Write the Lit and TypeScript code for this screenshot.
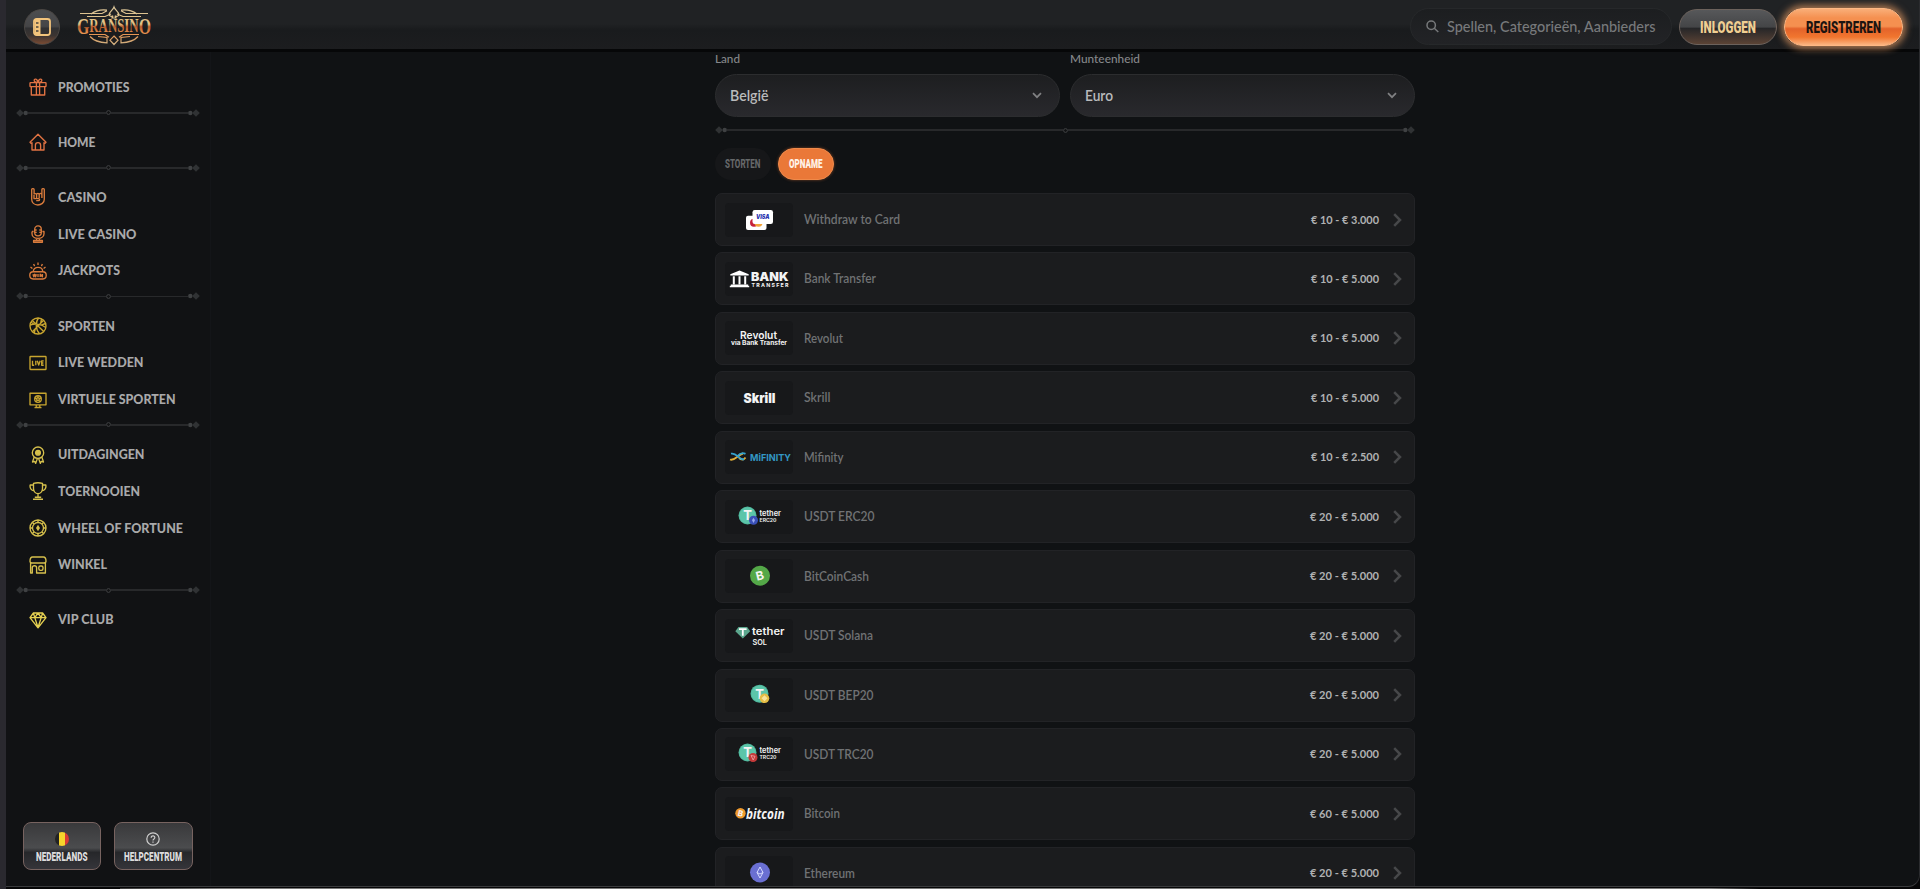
import { LitElement, html, svg, css, TemplateResult, SVGTemplateResult } from 'lit';
import { customElement, property } from 'lit/decorators.js';

interface MenuItem {
  label: string;
  width: number;
  icon: string;
}

interface PaymentMethod {
  name: string;
  width: number;
  range: string;
  logo: string;
}

const MENU: MenuItem[][] = [
  [{ label: 'PROMOTIES', width: 71.5, icon: 'gift' }],
  [{ label: 'HOME', width: 37.5, icon: 'home' }],
  [
    { label: 'CASINO', width: 48.5, icon: 'rock' },
    { label: 'LIVE CASINO', width: 78.5, icon: 'mic' },
    { label: 'JACKPOTS', width: 62, icon: 'jackpot' },
  ],
  [
    { label: 'SPORTEN', width: 57, icon: 'ball' },
    { label: 'LIVE WEDDEN', width: 85.5, icon: 'live' },
    { label: 'VIRTUELE SPORTEN', width: 117.5, icon: 'screen' },
  ],
  [
    { label: 'UITDAGINGEN', width: 86.5, icon: 'medal' },
    { label: 'TOERNOOIEN', width: 82, icon: 'trophy' },
    { label: 'WHEEL OF FORTUNE', width: 125, icon: 'wheel' },
    { label: 'WINKEL', width: 49, icon: 'shop' },
  ],
  [{ label: 'VIP CLUB', width: 55.5, icon: 'gem' }],
];

const METHODS: PaymentMethod[] = [
  { name: 'Withdraw to Card', width: 96, range: '€ 10 - € 3.000', logo: 'card' },
  { name: 'Bank Transfer', width: 72, range: '€ 10 - € 5.000', logo: 'bank' },
  { name: 'Revolut', width: 39, range: '€ 10 - € 5.000', logo: 'revolut' },
  { name: 'Skrill', width: 26.5, range: '€ 10 - € 5.000', logo: 'skrill' },
  { name: 'Mifinity', width: 39.5, range: '€ 10 - € 2.500', logo: 'mifinity' },
  { name: 'USDT ERC20', width: 70.5, range: '€ 20 - € 5.000', logo: 'erc20' },
  { name: 'BitCoinCash', width: 65, range: '€ 20 - € 5.000', logo: 'bch' },
  { name: 'USDT Solana', width: 69, range: '€ 20 - € 5.000', logo: 'solana' },
  { name: 'USDT BEP20', width: 69.5, range: '€ 20 - € 5.000', logo: 'bep20' },
  { name: 'USDT TRC20', width: 69.5, range: '€ 20 - € 5.000', logo: 'trc20' },
  { name: 'Bitcoin', width: 36, range: '€ 60 - € 5.000', logo: 'bitcoin' },
  { name: 'Ethereum', width: 51, range: '€ 20 - € 5.000', logo: 'eth' },
];

// All menu icons share an 18x18 box and are stroked with the item colour.
const ICONS: Record<string, SVGTemplateResult> = {
  gift: svg`<rect x="1" y="4.6" width="16" height="4" rx=".6"/><path d="M2.3 8.6V17h13.4V8.6M7.4 4.8V17M10.6 4.8V17M9 4.4C6.8 4.6 4.9 3.8 5.2 2.1 5.5.5 8.3.4 9 4.4c.7-4 3.500-3.900 3.800-2.300.3 1.700-1.600 2.500-3.800 2.300"/>`,
  home: svg`<path d="M1 9.300 9 1.300l8 8-1.200 1.100-.8-.7V17H3V9.700l-.8.7zM6.400 17v-4.800a2.600 2.600 0 0 1 5.200 0V17"/>`,
  rock: svg`<path d="M2.700 1.400v9.800c0 3.400 2.600 5.800 6.100 5.800s6.500-2.400 6.500-5.800V1.400c0-1-2.400-1-2.400 0v5M2.700 1.400c0-1 2.400-1 2.400 0v5.200M5.100 6.600c0-1.300 2.500-1.300 2.500 0v3.300M7.600 6.400c0-1.300 2.600-1.300 2.600 0v3.500M10.200 6.400c0-1.300 2.700-1.300 2.700 0v3.500M5 7v3.600h4.600c1.300 0 1.300 2-.2 2H7.200"/>`,
  mic: svg`<rect x="5.700" y=".9" width="6.600" height="10" rx="3.300"/><path d="M5.700 5h2M10.300 5h2M5.700 7.300h2M10.300 7.300h2M3 6.500H4.600M3 6.500v2.200c0 2.600 2.400 4.700 6 4.700s6-2.100 6-4.700V6.500h-1.600M7.600 13.400v2M10.400 13.400v2M4.600 17.200v-1.700h8.800v1.700z"/>`,
  jackpot: svg`<rect x=".8" y="9.700" width="16.400" height="7.300" rx="3.400"/><path d="M4.300 9.500c0-2.400 2-4.100 4.700-4.100s4.700 1.700 4.700 4.100M9 .6v2.500M4.600 2l1 2.100M13.400 2l-1 2.100M1.500 5l1.900 1.500M16.500 5l-1.900 1.500"/><path d="m4 12.200.8 2.600.9-2.600.9 2.600.8-2.600M9 12v3M11.200 15v-2.800l2.200 2.600V12"/>`,
  ball: svg`<circle cx="9" cy="9" r="8"/><path d="m3.300 3.400 11.400 11.200M14.600 3.300 3.400 14.700M9.600 1C6.400 4.500 6.300 12 10.500 16.800M1.200 8C6 6.300 12.500 7 16.800 10.500M2 5.300l3.200 2M12.500 2l-.8 4.200M16.500 6.500l-4.300 1.600M5.200 16.200l1-4"/>`,
  live: svg`<rect x="1" y="2.500" width="16" height="13" rx=".6"/><path d="M3.500 6.800v4.400h1.700M6.800 6.800v4.400M8.300 6.800 9.700 11l1.500-4.200M14.700 6.800h-2v4.400h2M12.700 9h1.700"/>`,
  screen: svg`<path d="M1 2.200h16v11.600H1zM5.500 16.600h7M7.200 13.800v2.600h3.600v-2.600"/><circle cx="9" cy="8" r="3.300"/><path d="m9 6.500 1.500 1.100-.6 1.700H8.100l-.6-1.700zM9 4.700v1.800M12 7l-1.500.6M10.900 10.600l-1-1.300M7.100 10.600l1-1.300M6 7l1.500.6"/>`,
  medal: svg`<circle cx="9" cy="6.700" r="5.700"/><circle cx="9" cy="6.700" r="2.400" fill="currentColor"/><path d="m5.200 11-1.700 5 2.200-.6 1 2 1.700-5M12.800 11l1.700 5-2.200-.6-1 2-1.700-5"/>`,
  trophy: svg`<path d="M4.500 1.400c2-.6 7-.6 9 0v4.800c0 3.300-2 5.400-4.500 5.400S4.500 9.500 4.500 6.200zM4.500 3H1.200C.6 5.800 2 8.300 5.300 8.800M13.500 3h3.300c.6 2.800-.8 5.300-4.100 5.800M9 11.600v3.600M5.800 15.200h6.400M4 17.200h10"/>`,
  wheel: svg`<circle cx="9" cy="9" r="8"/><circle cx="9" cy="9" r="5.500"/><path d="M9 1v2.500M9 14.500V17M1 9h2.500M14.500 9H17M3.400 3.400l1.700 1.700M12.900 12.900l1.700 1.700M14.600 3.400l-1.700 1.700M5.100 12.900l-1.700 1.700"/><path fill="currentColor" stroke="none" d="m9 5.700 2 3.300-2 3.300L7 9z"/>`,
  shop: svg`<path d="M3.600 1h10.800C16 1 17 3 17 5.300c0 1.200-1 1.700-2 1.700H3C2 7 1 6.500 1 5.300 1 3 2 1 3.600 1zM1.600 7v10h1.700v-5.200c0-2.800 4.300-2.800 4.300 0V17h8.800V7"/><rect x="9.800" y="10" width="4.200" height="4.300" rx="1.500"/>`,
  gem: svg`<path d="M4.400 2h9.200l3.400 4.600L9 16.800 1 6.600zM1 6.600h16M9 2 5.800 6.600 9 16.500l3.200-9.900zM4.400 2l1.400 4.600M13.600 2l-1.400 4.600"/>`,
};

const tether = (x: number, y: number, r: number) => svg`
  <circle cx=${x} cy=${y} r=${r} fill="#4fb79c"/>
  <circle cx=${x} cy=${y} r=${r - 1} fill="#5cc5a9"/>
  <text x=${x} y=${y + r * 0.55} class="logo-sans" text-anchor="middle" font-size=${r * 1.45}>T</text>`;

// Provider logos, drawn on a 68x34 plate.
const LOGOS: Record<string, SVGTemplateResult> = {
  card: svg`
    <rect x="21" y="12.800" width="20.500" height="14.200" rx="2" fill="#fff"/>
    <circle cx="29" cy="19.700" r="4" fill="#c5213b"/><circle cx="33.500" cy="19.700" r="4" fill="#f2a43a"/>
    <rect x="27.500" y="7" width="20.500" height="14" rx="2.200" fill="#fff"/>
    <text x="31" y="16" class="logo-sans heavy" font-style="italic" font-size="6.200" textLength="13.500" lengthAdjust="spacingAndGlyphs" fill="#2d36b0">VISA</text>`,
  bank: svg`
    <path fill="#fff" d="m14.500 8.500 9.200 3.700v1.300H5.300v-1.300zM7.800 14.200h2v8h-2zM13.500 14.200h2v8h-2zM19.200 14.200h2v8h-2zM5.800 22.500h17.400v1.200h1v1.600H4.800v-1.600h1z"/>
    <text x="26" y="19" class="logo-sans heavy" font-size="12" textLength="37.500" lengthAdjust="spacingAndGlyphs">BANK</text>
    <text x="26.500" y="25.300" class="logo-sans" font-size="5.300" textLength="37">TRANSFER</text>`,
  revolut: svg`
    <text x="15" y="18" class="logo-sans mid" font-size="11" textLength="37" lengthAdjust="spacingAndGlyphs">Revolut</text>
    <text x="6" y="24" class="logo-sans" font-size="5.600" textLength="56" lengthAdjust="spacingAndGlyphs">via Bank Transfer</text>`,
  skrill: svg`<text x="18.500" y="22" class="logo-sans heavy" font-size="13.500" textLength="32" lengthAdjust="spacingAndGlyphs">Skrill</text>`,
  mifinity: svg`
    <path fill="none" stroke="#e0ae38" stroke-width="1.800" d="M5 19.500c5 1.800 8-5 13-6M14 18c2 2.300 5 2.200 6.500-.5"/>
    <path fill="none" stroke="#35a3cf" stroke-width="1.800" d="M6 13.700c6-1.500 7 5.800 13 5.800M12 16.500c3-3.500 6-4 8.500-2.600"/>
    <text x="25" y="20.500" class="logo-sans" font-size="9.500" textLength="41" lengthAdjust="spacingAndGlyphs" fill="#3398c5">MiFINITY</text>`,
  erc20: svg`
    ${tether(22.5, 15.5, 9)}
    <circle cx="28.500" cy="20.300" r="4.500" fill="#3a50b8"/><path fill="#9aa8ef" d="m28.500 17.700 1.500 2.600-1.500 2.600-1.500-2.600z"/>
    <text x="34.500" y="16.200" class="logo-sans mid" font-size="7.500" textLength="21.500" lengthAdjust="spacingAndGlyphs">tether</text>
    <text x="34.500" y="22" class="logo-sans mid" font-size="5" textLength="17" lengthAdjust="spacingAndGlyphs">ERC20</text>`,
  bch: svg`
    <circle cx="35" cy="16.700" r="10" fill="#54a848"/>
    <text x="35" y="21" class="logo-sans" text-anchor="middle" font-size="12" transform="rotate(-14 35 17)">B</text>`,
  solana: svg`
    <path fill="#5ca78e" d="M13.500 8h8.600l3.100 4.300-7.400 7.200-7.500-7.200z"/>
    <path fill="#fff" d="M14 9.200h7.600v1.700h-2.900v5.800h-1.800v-5.800H14z"/>
    <text x="27" y="16.300" class="logo-sans mid" font-size="10" textLength="32.500" lengthAdjust="spacingAndGlyphs">tether</text>
    <text x="27.500" y="26" class="logo-sans mid" font-size="7.600" textLength="14.500" lengthAdjust="spacingAndGlyphs">SOL</text>`,
  bep20: svg`
    ${tether(34.5, 15.7, 9)}
    <circle cx="39.500" cy="20.300" r="4.800" fill="#e5bd45"/><path fill="#fff3c0" d="m39.500 17.300 3 3-3 3-3-3z" opacity=".7"/>`,
  trc20: svg`
    ${tether(22.5, 15.5, 9)}
    <circle cx="28" cy="20.500" r="4.500" fill="#c43a3a"/><path fill="none" stroke="#f0a8a8" stroke-width=".8" d="m26 18.500 4 .8-1.800 3.700z"/>
    <text x="34.500" y="16.200" class="logo-sans mid" font-size="7.500" textLength="21.500" lengthAdjust="spacingAndGlyphs">tether</text>
    <text x="34.500" y="22" class="logo-sans mid" font-size="5" textLength="17" lengthAdjust="spacingAndGlyphs">TRC20</text>`,
  bitcoin: svg`
    <circle cx="15.500" cy="16.300" r="5.200" fill="#ef9a2d"/>
    <text x="15.500" y="19.200" class="logo-sans" font-size="8" text-anchor="middle" transform="rotate(14 15.500 16.300)">B</text>
    <text x="21" y="21.500" class="logo-humanist" font-size="13.500" textLength="38.500" lengthAdjust="spacingAndGlyphs">bitcoin</text>`,
  eth: svg`
    <circle cx="35" cy="16.500" r="10" fill="#6a6fd2"/>
    <path fill="none" stroke="#d6daff" stroke-width="1" d="m35 11 3 5.500-3 5.500-3-5.500zM32 16.500l3 1.500 3-1.500"/>`,
};

/** Single line of text set to an exact width. */
@customElement('fit-text')
export class FitText extends LitElement {
  @property({ type: String })
  text = '';

  @property({ type: Number })
  width = 50;

  @property({ type: Number })
  size = 12.5;

  static override styles = css`
    :host {
      display: block;
      flex: none;
    }
    svg {
      display: block;
      overflow: visible;
      fill: currentColor;
    }
  `;

  override render() {
    const height = Math.round(this.size * 1.2);
    return html`
      <svg width=${this.width} height=${height}>
        <text x="0" y=${height / 2 + this.size * 0.36} font-size=${this.size}
          textLength=${this.width} lengthAdjust="spacingAndGlyphs">${this.text}</text>
      </svg>
    `;
  }
}

/** Thin rule with diamonds at its ends and a ring in the middle. */
@customElement('ornament-line')
export class OrnamentLine extends LitElement {
  static override styles = css`
    :host {
      display: flex;
      align-items: center;
      height: 8px;
      color: #303234;
    }
    svg {
      flex: none;
      display: block;
    }
    .flip {
      transform: scaleX(-1);
    }
    .rule {
      flex: 1;
      height: 1.500px;
      background: #28292b;
    }
  `;

  private end(cls: string) {
    return html`
      <svg class=${cls} width="12" height="8" viewBox="0 0 12 8" fill="currentColor">
        <path d="m4 .2 3.800 3.800L4 7.800.2 4z" />
        <circle cx="9.700" cy="4" r="2.200" fill="#3f4143" />
      </svg>
    `;
  }

  override render() {
    return html`
      ${this.end('')}
      <div class="rule"></div>
      <svg width="5" height="5" viewBox="0 0 5 5">
        <circle cx="2.500" cy="2.500" r="1.900" fill="none" stroke="#404244" />
      </svg>
      <div class="rule"></div>
      ${this.end('flip')}
    `;
  }
}

@customElement('app-root')
export class AppRoot extends LitElement {
  static override styles = css`
    :host {
      display: block;
      width: 1920px;
      height: 889px;
      overflow: hidden;
      box-sizing: border-box;
      border-left: 6px solid #2a292f;
      background: #060607;
      color: #b4b5b6;
      font-family: Lato, 'Liberation Sans', sans-serif;
    }
    * {
      box-sizing: border-box;
    }
    .page {
      display: flex;
      flex-direction: column;
      height: 887px;
      border-right: 1px solid #2b2c2f;
      border-bottom: 1px solid #3a3b3d;
      border-bottom-right-radius: 12px;
      background: #101214;
      overflow: hidden;
    }
    .header {
      flex: none;
      display: flex;
      align-items: center;
      height: 52px;
      padding: 4px 16px 0 18px;
      border-bottom: 3px solid #060708;
      background: linear-gradient(#202224 0 24px, #191b1d 30px, #1c1d1f);
    }
    .toggle {
      display: flex;
      align-items: center;
      justify-content: center;
      width: 36px;
      height: 36px;
      border-radius: 50%;
      border: 1px solid #4b4744;
      background: linear-gradient(#4d4e50, #454547 48%, #303032 54%, #3b3431 75%, #7a4b33);
    }
    .brand {
      margin: -1px 0 0 17px;
      overflow: visible;
    }
    .brand text {
      font-family: 'Liberation Serif', serif;
      font-weight: bold;
    }
    .search {
      display: flex;
      align-items: center;
      gap: 8px;
      width: 262px;
      height: 37px;
      margin: 0 7px 0 auto;
      padding-left: 15px;
      border: 1px solid #26282a;
      border-radius: 19px;
      background: linear-gradient(#1c1e20, #222326);
      color: #77797b;
      font-weight: 500;
    }
    .pill {
      display: flex;
      align-items: center;
      justify-content: center;
      font-family: Roboto, sans-serif;
      font-weight: 900;
    }
    .login {
      width: 98px;
      height: 36px;
      margin-right: 7px;
      border: 1px solid #6c625c;
      border-radius: 18px;
      background: linear-gradient(#57585a, #444547 50%, #262628 54%, #5b4335);
      color: #f0cf92;
    }
    .register {
      width: 119px;
      height: 38px;
      border: 1px solid #ffb884;
      border-radius: 19px;
      background: linear-gradient(#f9ae78, #f59050 25% 48%, #e4632b 55%, #f1762f 78%, #fbb582);
      box-shadow: 0 0 7px 3px #a8754f;
      color: #1c1410;
    }
    .body {
      flex: 1;
      display: flex;
      min-height: 0;
      overflow: hidden;
    }
    .sidebar {
      flex: none;
      display: flex;
      flex-direction: column;
      width: 205px;
      padding: 17px 0 16px;
      border-right: 1px solid #131518;
      background: #111214;
    }
    .item {
      display: flex;
      align-items: center;
      gap: 10.500px;
      height: 36.750px;
      padding-left: 23px;
      font-weight: 900;
      color: #a9a9aa;
    }
    .item svg {
      flex: none;
      fill: none;
      stroke: currentColor;
      stroke-width: 1.350;
      stroke-linejoin: round;
    }
    .group0,
    .group1 {
      color: #e27343;
    }
    .group2 {
      color: #d97b3c;
    }
    .group3 {
      color: #c8a52f;
    }
    .group4 {
      color: #d6c04c;
    }
    .group5 {
      color: #e5d051;
    }
    .divider {
      height: 18.300px;
      padding: 3px 5px 0 10px;
      margin-right: 5px;
    }
    .bottom {
      display: flex;
      gap: 13px;
      margin-top: auto;
      padding-left: 16.500px;
    }
    .tile {
      display: flex;
      flex-direction: column;
      align-items: center;
      justify-content: center;
      gap: 3px;
      width: 78.500px;
      height: 48px;
      padding-top: 3px;
      border: 1px solid #776360;
      border-radius: 8px;
      background: linear-gradient(#39393b, #4b4c4e 54%, #26272a 64%, #35353a);
      color: #dcdcdc;
      font-family: Roboto, sans-serif;
      font-weight: 900;
    }
    .content {
      flex: 1;
      display: flex;
      flex-direction: column;
      align-items: flex-start;
      padding-left: 504px;
      overflow: hidden;
    }
    .fields {
      display: flex;
      gap: 10px;
      width: 700px;
    }
    .field {
      flex: 1;
    }
    .caption {
      height: 21.500px;
      color: #85878a;
      font-weight: 500;
    }
    .select {
      display: flex;
      align-items: center;
      justify-content: space-between;
      height: 43px;
      padding: 0 17px 0 14px;
      border: 1px solid #2c2d2f;
      border-radius: 22px;
      background: linear-gradient(#1d1e20, #29292d);
      color: #b9babb;
      font-weight: 600;
    }
    .split {
      width: 700px;
      margin-top: 9.500px;
    }
    .tabs {
      display: flex;
      gap: 7px;
      margin-top: 13.500px;
    }
    .tab {
      width: 56px;
      height: 32px;
      border-radius: 16px;
      background: #161719;
      color: #66686a;
      font-weight: 800;
    }
    .tab.active {
      background: #ea7838;
      border: 1px solid #f08a4a;
      box-shadow: 0 0 3px #7c4426;
      color: #fff3e8;
      font-weight: 900;
    }
    .methods {
      display: flex;
      flex-direction: column;
      gap: 6.450px;
      width: 700px;
      margin-top: 13.500px;
    }
    .method {
      flex: none;
      display: flex;
      align-items: center;
      height: 53px;
      padding: 0 12px 0 9px;
      border: 1px solid #222326;
      border-radius: 7px;
      background: #1b1c1e;
      color: #707274;
      font-weight: 600;
    }
    .plate {
      flex: none;
      width: 68px;
      height: 34px;
      margin-right: 10.500px;
      border-radius: 4px;
      background: #17181a;
      fill: #f4f4f4;
    }
    .logo-sans {
      font-family: Inter, sans-serif;
      font-weight: 700;
    }
    .logo-humanist {
      font-family: 'Open Sans', sans-serif;
      font-weight: 700;
      font-style: italic;
    }
    .heavy {
      font-weight: 900;
    }
    .mid {
      font-weight: 600;
    }
    .range {
      margin-left: auto;
      margin-right: 14.500px;
      color: #b0b1b2;
      font-weight: 700;
    }
    .foot {
      height: 1px;
      width: 1640px;
      margin: 1px 0 0 114px;
      background: linear-gradient(90deg, #3a3a3a, #787878 100px 1590px, #060607);
    }
  `;

  private renderBrand(): TemplateResult {
    return html`
      <svg class="brand" width="74" height="40" viewBox="0 0 74 40" fill="none" stroke="url(#gold)" stroke-width="1.200">
        <defs>
          <linearGradient id="gold" gradientUnits="userSpaceOnUse" x1="0" y1="0" x2="0" y2="40">
            <stop offset="0" stop-color="#d8c49a" />
            <stop offset=".45" stop-color="#e4c283" />
            <stop offset=".52" stop-color="#b65a2d" />
            <stop offset=".68" stop-color="#e9924e" />
            <stop offset="1" stop-color="#cbb58a" />
          </linearGradient>
        </defs>
        <path d="M3 7.500h22l5-2.700M71 7.500H49l-5-2.700M10 10.500h18l6-2.500M64 10.500H46l-6-2.500M14 8c5-3.500 11-4.500 16-3.800M60 8c-5-3.500-11-4.500-16-3.800" />
        <path d="M37 1c1 3 4.800 4.800 4.800 7.400 0 2-2.600 2.600-3.800 1.300L39 12h-4l1-2.300c-1.200 1.300-3.800.7-3.800-1.300C32.200 5.800 36 4 37 1z" />
        <path d="M12 28.500h16l4 2.800M62 28.500H46l-4 2.800M13 30.500c4 4.500 9 6 17 6.300v-5.300l-9-1M61 30.500c-4 4.500-9 6-17 6.300v-5.300l9-1M37 30l4 4.200-4 4.300-4-4.300z" />
        <text x="0" y="28" fill="url(#gold)" stroke="none" font-size="24" textLength="74" lengthAdjust="spacingAndGlyphs">G<tspan font-size="19.500" dy="-2.500">RANSIN</tspan><tspan dy="2.500">O</tspan></text>
      </svg>
    `;
  }

  private renderHeader(): TemplateResult {
    return html`
      <div class="header">
        <div class="toggle">
          <svg width="18" height="18" viewBox="0 0 18 18" fill="none" stroke="#f3c47c" stroke-width="1.800">
            <rect x="1" y="1" width="16" height="16" rx="2.500" />
            <path fill="#f3c47c" stroke="none" d="M2 1h5.500v16H2z" />
            <path stroke="#4a433d" stroke-width="1.300" d="M3 5h2.500M3 9h2.500M3 13h2.500" />
          </svg>
        </div>
        ${this.renderBrand()}
        <div class="search">
          <svg width="13" height="13" viewBox="0 0 13 13" fill="none" stroke="currentColor" stroke-width="1.500">
            <circle cx="5.200" cy="5.200" r="4.200" />
            <path d="m8.300 8.300 4 3.700" />
          </svg>
          <fit-text text="Spellen, Categorieën, Aanbieders" width="208.500" size="14.500"></fit-text>
        </div>
        <div class="pill login"><fit-text text="INLOGGEN" width="56" size="17"></fit-text></div>
        <div class="pill register"><fit-text text="REGISTREREN" width="75" size="17"></fit-text></div>
      </div>
    `;
  }

  private renderSidebar(): TemplateResult {
    return html`
      <div class="sidebar">
        ${MENU.map((group, i) => html`
          ${i > 0 ? html`<div class="divider"><ornament-line></ornament-line></div>` : ''}
          ${group.map(item => html`
            <div class="item">
              <svg class="group${i}" width="18" height="18" viewBox="0 0 18 18">${ICONS[item.icon]}</svg>
              <fit-text text=${item.label} width=${item.width} size="12.300"></fit-text>
            </div>
          `)}
        `)}
        <div class="bottom">
          <div class="tile">
            <svg width="14" height="14" viewBox="0 0 14 14">
              <clipPath id="round"><circle cx="7" cy="7" r="7" /></clipPath>
              <g clip-path="url(#round)">
                <path fill="#222" d="M0 0h4v14H0z" />
                <path fill="#f6d42c" d="M4 0h6v14H4z" />
                <path fill="#d93b35" d="M10 0h4v14h-4z" />
              </g>
            </svg>
            <fit-text text="NEDERLANDS" width="51.500" size="12.500"></fit-text>
          </div>
          <div class="tile">
            <svg width="14" height="14" viewBox="0 0 14 14" fill="none" stroke="#d0d0d0" stroke-width="1.200">
              <circle cx="7" cy="7" r="6.200" />
              <path d="M5.200 5.700c0-2.600 3.800-2.300 3.600 0C8.700 7 7 6.900 7 8.400M7 9.500v1.200" />
            </svg>
            <fit-text text="HELPCENTRUM" width="58" size="12.500"></fit-text>
          </div>
        </div>
      </div>
    `;
  }

  private renderField(label: string, labelWidth: number, value: string, valueWidth: number): TemplateResult {
    return html`
      <div class="field">
        <div class="caption"><fit-text text=${label} width=${labelWidth} size="11.500"></fit-text></div>
        <div class="select">
          <fit-text text=${value} width=${valueWidth} size="14.500"></fit-text>
          <svg width="10" height="7" viewBox="0 0 10 7" fill="none" stroke="#808183" stroke-width="1.700">
            <path d="m1 1.200 4 4 4-4" />
          </svg>
        </div>
      </div>
    `;
  }

  private renderMethod(method: PaymentMethod): TemplateResult {
    return html`
      <div class="method">
        <svg class="plate" width="68" height="34" viewBox="0 0 68 34">${LOGOS[method.logo]}</svg>
        <fit-text text=${method.name} width=${method.width} size="12.500"></fit-text>
        <fit-text class="range" text=${method.range} width=${method.range.includes('€ 10') ? 68 : 69} size="11.800"></fit-text>
        <svg width="9" height="14" viewBox="0 0 9 14" fill="none" stroke="#47484a" stroke-width="2.500">
          <path d="m1.200 1.200 5.800 5.800-5.800 5.800" />
        </svg>
      </div>
    `;
  }

  override render() {
    return html`
      <div class="page">
        ${this.renderHeader()}
        <div class="body">
          ${this.renderSidebar()}
          <div class="content">
            <div class="fields">
              ${this.renderField('Land', 25, 'België', 38.5)}
              ${this.renderField('Munteenheid', 70, 'Euro', 28)}
            </div>
            <ornament-line class="split"></ornament-line>
            <div class="tabs">
              <div class="pill tab"><fit-text text="STORTEN" width="35.500" size="12.500"></fit-text></div>
              <div class="pill tab active"><fit-text text="OPNAME" width="33.500" size="12.500"></fit-text></div>
            </div>
            <div class="methods">${METHODS.map(method => this.renderMethod(method))}</div>
          </div>
        </div>
      </div>
      <div class="foot"></div>
    `;
  }
}

declare global {
  interface HTMLElementTagNameMap {
    'app-root': AppRoot;
    'fit-text': FitText;
    'ornament-line': OrnamentLine;
  }
}
